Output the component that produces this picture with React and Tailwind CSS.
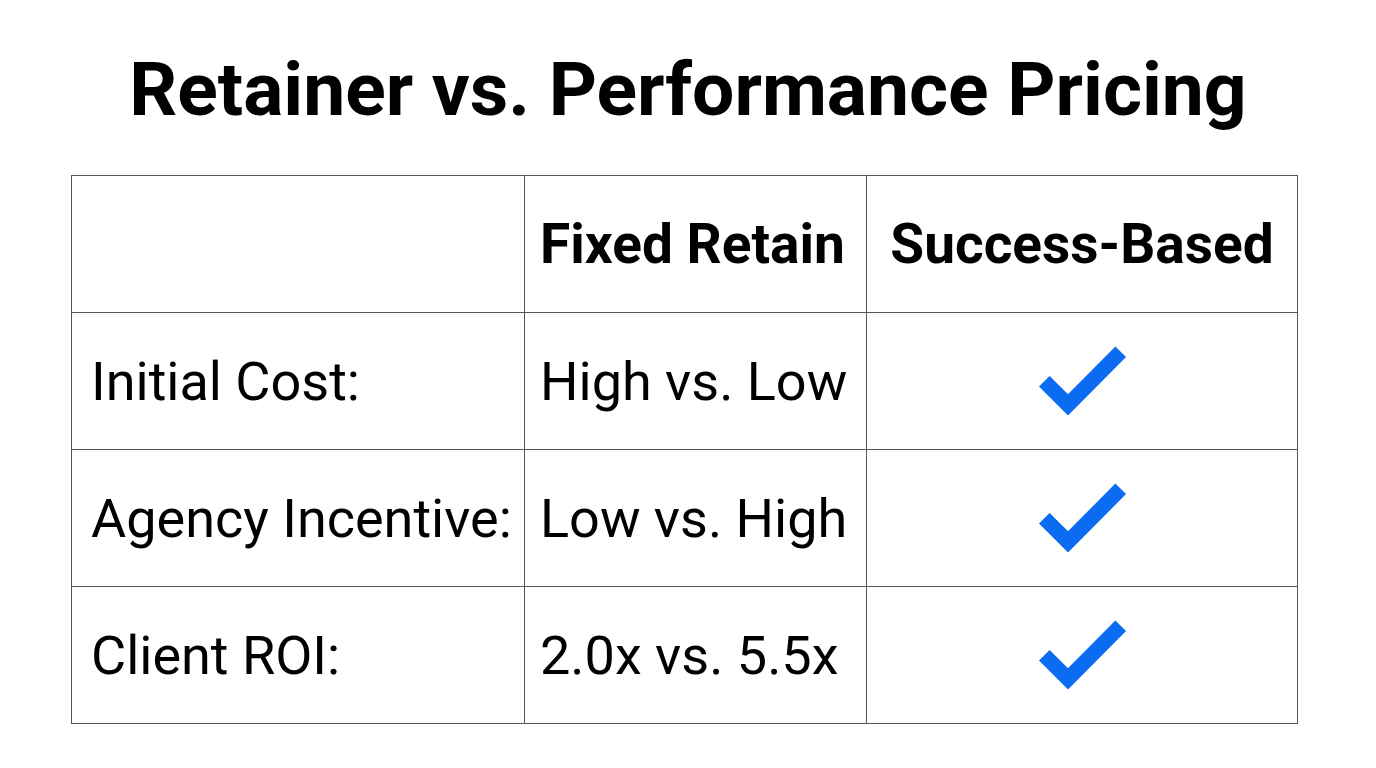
export default function App() {
    const rows = [
        { label: "Initial Cost:", value: "High vs. Low" },
        { label: "Agency Incentive:", value: "Low vs. High" },
        { label: "Client ROI:", value: "2.0x vs. 5.5x" },
    ];

    return (
        <div className="w-[1376px] h-[768px] bg-white overflow-hidden font-['Roboto',sans-serif] text-black">
            <h1 className="pt-[45px] h-[175px] text-center text-[75px] font-bold leading-[88px]">
                Retainer vs. Performance Pricing
            </h1>

            <table className="ml-[71px] border-collapse table-fixed">
                <colgroup>
                    <col className="w-[453px]" />
                    <col className="w-[342px]" />
                    <col className="w-[431px]" />
                </colgroup>
                <thead>
                    <tr className="h-[137px]">
                        <th className="border border-[#555]"></th>
                        <th className="border border-[#555] pl-[15px] text-left text-[55px] font-bold whitespace-nowrap">
                            Fixed Retain
                        </th>
                        <th className="border border-[#555] text-center text-[55px] font-bold whitespace-nowrap">
                            Success-Based
                        </th>
                    </tr>
                </thead>
                <tbody>
                    {rows.map((row) => (
                        <tr key={row.label} className="h-[137px]">
                            <td className="border border-[#555] pl-[19px] text-[54px] whitespace-nowrap">
                                {row.label}
                            </td>
                            <td className="border border-[#555] pl-[15px] text-[54px] whitespace-nowrap">
                                {row.value}
                            </td>
                            <td className="border border-[#555]">
                                <div className="flex justify-center">
                                    <svg width="100" height="80" viewBox="0 0 100 80" className="ml-[1px]">
                                        <path
                                            d="M11.3 40.2 L35 63.9 L87.7 10.8"
                                            fill="none"
                                            stroke="#0b6cf2"
                                            strokeWidth="15"
                                            strokeLinecap="butt"
                                            strokeLinejoin="miter"
                                        />
                                    </svg>
                                </div>
                            </td>
                        </tr>
                    ))}
                </tbody>
            </table>
        </div>
    );
}
